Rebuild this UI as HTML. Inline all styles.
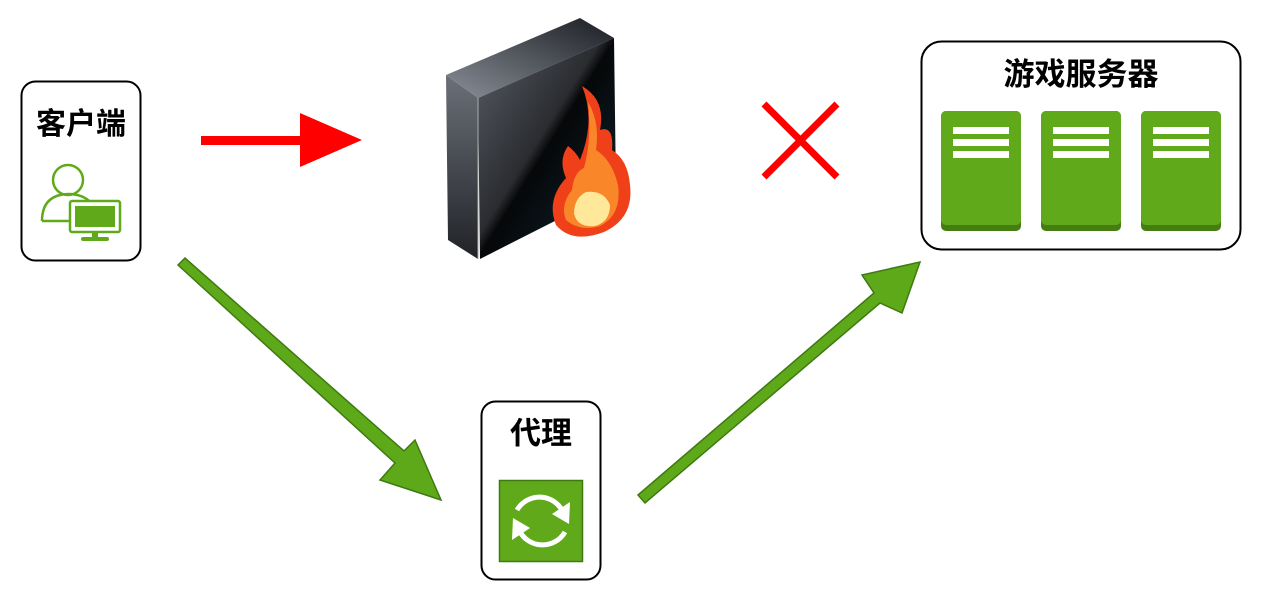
<!DOCTYPE html>
<html><head><meta charset="utf-8"><style>
html,body{margin:0;padding:0;background:#fff;width:1262px;height:602px;overflow:hidden}
text{font-family:"Liberation Sans","Noto Sans CJK SC",sans-serif;font-weight:bold;fill:#000}
</style></head><body>
<svg width="1262" height="602" viewBox="0 0 1262 602" xmlns="http://www.w3.org/2000/svg">
<defs>
<linearGradient id="top" x1="0" y1="1" x2="1" y2="0"><stop offset="0" stop-color="#8a8f98"/><stop offset="1" stop-color="#1a1d22"/></linearGradient>
<linearGradient id="side" x1="0" y1="0" x2="0" y2="1"><stop offset="0" stop-color="#6b7079"/><stop offset="1" stop-color="#202226"/></linearGradient>
<linearGradient id="front" x1="0" y1="0" x2="1" y2="1"><stop offset="0" stop-color="#5a5e66"/><stop offset="0.45" stop-color="#2a2c30"/><stop offset="0.5" stop-color="#060708"/><stop offset="1" stop-color="#0d2a38"/></linearGradient>
</defs>
<rect x="21.5" y="81.5" width="119" height="179" rx="14" fill="#fff" stroke="#000" stroke-width="2"/>
<text x="81" y="134" font-size="30" text-anchor="middle">客户端</text>
<circle cx="68" cy="180" r="15" fill="#fff" stroke="#60a91a" stroke-width="2.5"/>
<path d="M42 221 Q42 195 68 194 Q84 194 92 204" fill="none" stroke="#60a91a" stroke-width="2.5"/>
<path d="M42 221 L70 221" stroke="#60a91a" stroke-width="2.5"/>
<rect x="70" y="201" width="50" height="31" rx="2" fill="#fff" stroke="#60a91a" stroke-width="2.5"/>
<rect x="75" y="206" width="40" height="21" fill="#60a91a"/>
<rect x="92" y="232" width="6" height="6" fill="#60a91a"/>
<rect x="81" y="237" width="28" height="4" rx="2" fill="#60a91a"/>
<rect x="201" y="136" width="105" height="9" fill="#f00"/>
<polygon points="300,113 362,140 300,167" fill="#f00"/>
<polygon points="446,75 580,18 614,38 478,98" fill="url(#top)"/>
<polygon points="446,75 478,98 478,259 448,240" fill="url(#side)"/>
<polygon points="478,98 614,38 616,190 480,259" fill="url(#front)"/>
<line x1="478" y1="98" x2="478" y2="259" stroke="#aaa" stroke-width="1"/>
<path d="M582 86 Q606 100 600 130 Q614 125 612 150 Q628 160 630 185 Q634 218 604 232 Q572 244 556 225 Q546 200 566 178 Q558 160 568 146 Q576 152 580 160 Q596 120 582 86Z" fill="#f0401a"/>
<path d="M588 102 Q600 122 596 150 Q612 160 618 185 Q622 215 600 226 Q580 232 566 220 Q560 205 572 190 Q574 172 584 168 Q592 140 588 102Z" fill="#f9872a"/>
<path d="M586 192 Q604 190 610 205 Q610 222 595 226 Q578 228 574 214 Q574 198 586 192Z" fill="#ffe89a"/>
<path d="M764 104 L837 177 M837 104 L764 177" stroke="#f00" stroke-width="7"/>
<rect x="921.5" y="41.5" width="319" height="208" rx="20" fill="#fff" stroke="#000" stroke-width="2"/>
<text x="1081" y="85" font-size="31" text-anchor="middle">游戏服务器</text>
<g id="srv">
<rect x="941" y="111" width="80" height="120" rx="5" fill="#467d12"/>
<rect x="941" y="111" width="80" height="114" rx="5" fill="#60a91a"/>
<rect x="953" y="127" width="56" height="7" fill="#fff"/>
<rect x="953" y="139" width="56" height="7" fill="#fff"/>
<rect x="953" y="151" width="56" height="7" fill="#fff"/>
</g>
<use href="#srv" x="100"/>
<use href="#srv" x="200"/>
<polygon points="178,265 185,258 404,451 415,440 441,500 380,480 395,463" fill="#5ea91a" stroke="#3e7a10" stroke-width="1.5"/>
<polygon points="638,495 645,503 880,303 902,313 920,262 862,275 874,293" fill="#5ea91a" stroke="#3e7a10" stroke-width="1.5"/>
<rect x="481.5" y="401.5" width="119" height="178" rx="14" fill="#fff" stroke="#000" stroke-width="2"/>
<text x="541" y="444" font-size="31" text-anchor="middle">代理</text>
<rect x="499.5" y="480.5" width="83" height="81" fill="#60a91a" stroke="#3e7a10" stroke-width="1.5"/>
<path d="M517 510 A26 26 0 0 1 563 512" fill="none" stroke="#fff" stroke-width="5"/>
<polygon points="552,514 570,502 569,524" fill="#fff"/>
<path d="M565 532 A26 26 0 0 1 519 530" fill="none" stroke="#fff" stroke-width="5"/>
<polygon points="530,528 512,540 513,518" fill="#fff"/>
</svg>
</body></html>
